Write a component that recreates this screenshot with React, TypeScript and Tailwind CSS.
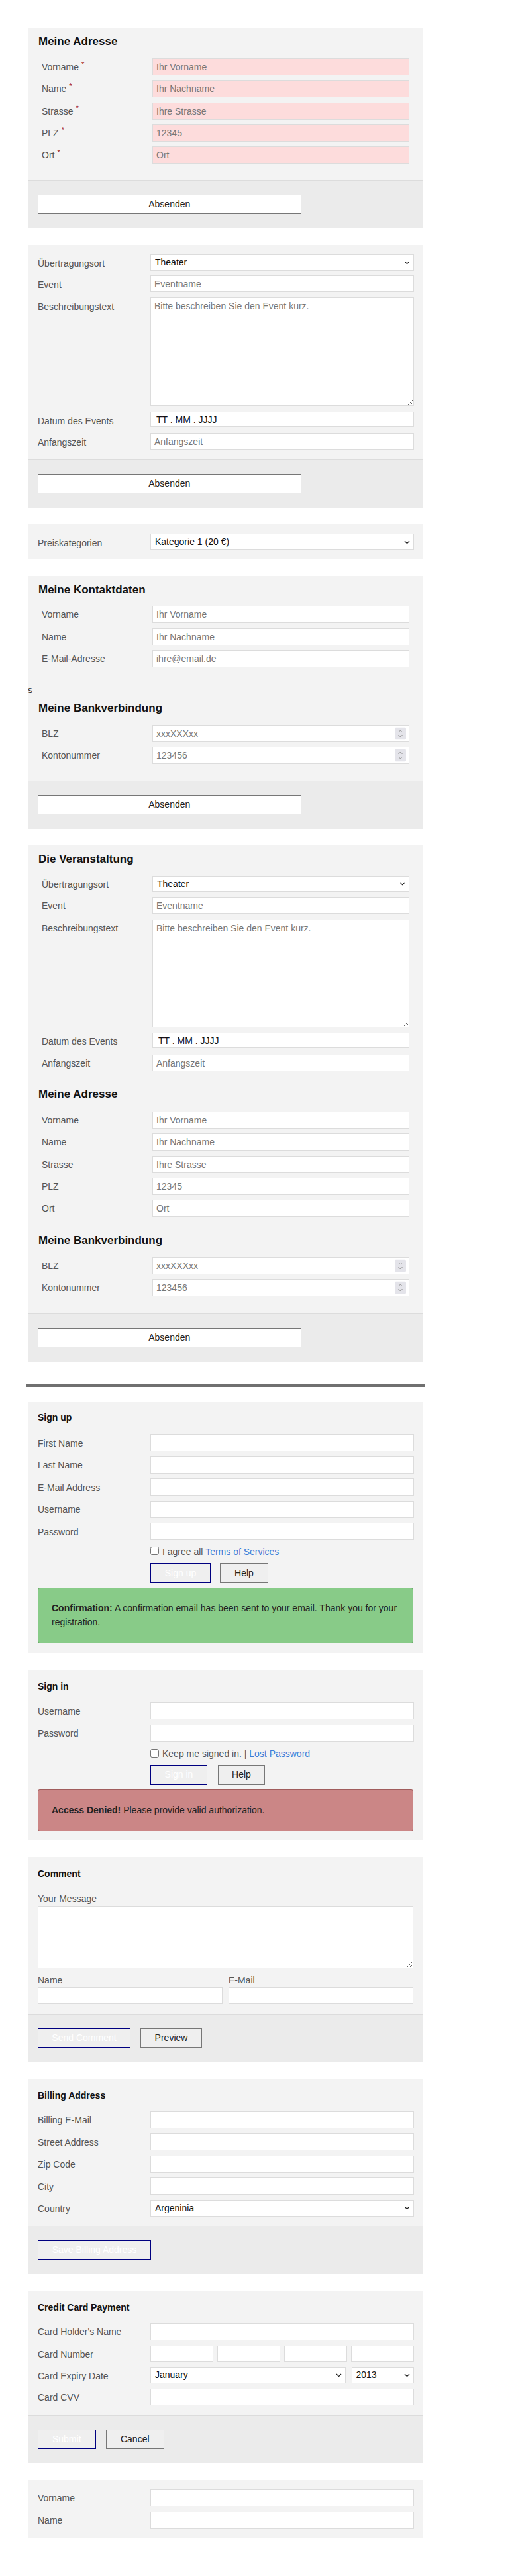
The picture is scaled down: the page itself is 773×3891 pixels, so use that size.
import React from 'react'

const inputBase =
    'block w-full border border-[#dcdcdc] px-[5px] text-[14px] text-[#111] outline-none placeholder:text-[#777]'

function TextInput({ placeholder, h = 'h-[26px]', pink }: { placeholder?: string; h?: string; pink?: boolean }) {
    return <input className={`${h} ${inputBase} ${pink ? 'bg-[#fddcdc]' : 'bg-white'}`} placeholder={placeholder} />
}

function DateInput({ h = 'h-[23px]' }: { h?: string }) {
    return <input readOnly value="TT . MM . JJJJ" className={`${h} ${inputBase} bg-white pl-[8px]`} />
}

function Area({ placeholder, h }: { placeholder?: string; h: string }) {
    return <textarea className={`${h} ${inputBase} bg-white pt-[4px] leading-[17px]`} placeholder={placeholder} />
}

function NumInput({ placeholder, h = 'h-[26px]' }: { placeholder: string; h?: string }) {
    return (
        <div className="relative">
            <input className={`${h} ${inputBase} bg-white`} placeholder={placeholder} />
            {/* Spinner wie im Safari */}
            <svg
                className="pointer-events-none absolute right-[5px] top-1/2 -translate-y-1/2"
                width="17"
                height="19"
                viewBox="0 0 17 19"
            >
                <rect width="17" height="19" rx="2" fill="#e4e4ea" />
                <path d="M5.5 7.5L8.5 4.5L11.5 7.5" fill="none" stroke="#8a8a8a" strokeWidth="1" />
                <path d="M5.5 11.5L8.5 14.5L11.5 11.5" fill="none" stroke="#8a8a8a" strokeWidth="1" />
            </svg>
        </div>
    )
}

function Select({ value, h = 'h-[25px]' }: { value: string; h?: string }) {
    return (
        <div className="relative">
            <select className={`${h} ${inputBase} appearance-none bg-white pl-[6px]`} defaultValue={value}>
                <option>{value}</option>
            </select>
            <svg
                className="pointer-events-none absolute right-[6px] top-1/2 -translate-y-1/2"
                width="9"
                height="6"
                viewBox="0 0 9 6"
            >
                <path d="M1 1L4.5 4.6L8 1" fill="none" stroke="#222" strokeWidth="1.3" />
            </svg>
        </div>
    )
}

function RowA({ label, req, children }: { label: string; req?: boolean; children: React.ReactNode }) {
    return (
        <div className="flex items-start pl-[21px]">
            <div className="h-[24px] w-[167px] shrink-0 text-[14px] leading-[26px] text-[#555]">
                {label}
                {req && <sup className="ml-[4px] text-[11px] text-[#a31515]">*</sup>}
            </div>
            <div className="w-[388px]">{children}</div>
        </div>
    )
}

function RowB({ label, children }: { label: string; children: React.ReactNode }) {
    return (
        <div className="flex items-start pl-[15px]">
            <div className="h-[24px] w-[170px] shrink-0 pt-[1.5px] text-[14px] leading-[25px] text-[#555]">{label}</div>
            <div className="w-[398px]">{children}</div>
        </div>
    )
}

function TitleA({ children }: { children: React.ReactNode }) {
    return <h2 className="pl-[16px] text-[17px] font-bold leading-[20px] text-[#111]">{children}</h2>
}

function TitleB({ children }: { children: React.ReactNode }) {
    return <h3 className="pl-[15px] text-[14px] font-bold leading-[20px] text-[#111]">{children}</h3>
}

function Footer({ children }: { children: React.ReactNode }) {
    return (
        <div className="flex gap-[15px] border-t border-[#dcdcdc] bg-[#ebebeb] px-[15px] pt-[21px] pb-[22px]">
            {children}
        </div>
    )
}

function Absenden() {
    return (
        <button className="h-[29px] w-[397.5px] border border-[#777] bg-white text-[14px] text-[#222]">
            Absenden
        </button>
    )
}

function Primary({ children, w, h = 'h-[29px]' }: { children: React.ReactNode; w: string; h?: string }) {
    return (
        <button className={`${w} ${h} border border-[#000080] bg-[#efefef] text-[14px] text-white`}>
            {children}
        </button>
    )
}

function Secondary({ children, w, h = 'h-[29px]' }: { children: React.ReactNode; w: string; h?: string }) {
    return (
        <button className={`${w} ${h} border border-[#777] bg-[#efefef] text-[14px] text-[#222]`}>
            {children}
        </button>
    )
}

export default function App() {
    return (
        <div className="min-h-[3891px] bg-white pl-[42px] pt-[42px] font-['Liberation_Sans',Arial,sans-serif]">
            {/* Meine Adresse (Pflichtfelder) */}
            <section className="w-[597px] bg-[#f3f3f3]">
                <div className="pt-[11px] pb-[25px]">
                    <TitleA>Meine Adresse</TitleA>
                    <div className="mt-[15px] flex flex-col gap-[7.25px]">
                        <RowA label="Vorname" req><TextInput pink placeholder="Ihr Vorname" /></RowA>
                        <RowA label="Name" req><TextInput pink placeholder="Ihr Nachname" /></RowA>
                        <RowA label="Strasse" req><TextInput pink placeholder="Ihre Strasse" /></RowA>
                        <RowA label="PLZ" req><TextInput pink placeholder="12345" /></RowA>
                        <RowA label="Ort" req><TextInput pink placeholder="Ort" /></RowA>
                    </div>
                </div>
                <Footer><Absenden /></Footer>
            </section>

            {/* Event */}
            <section className="mt-[25px] w-[597px] bg-[#f3f3f3]">
                <div className="flex flex-col pt-[14px] pb-[15px]">
                    <RowB label="Übertragungsort"><Select value="Theater" /></RowB>
                    <div className="mt-[7px]"><RowB label="Event"><TextInput h="h-[25px]" placeholder="Eventname" /></RowB></div>
                    <div className="mt-[8px]">
                        <RowB label="Beschreibungstext">
                            <Area h="h-[164px]" placeholder="Bitte beschreiben Sie den Event kurz." />
                        </RowB>
                    </div>
                    <div className="mt-[9px]"><RowB label="Datum des Events"><DateInput /></RowB></div>
                    <div className="mt-[8px]"><RowB label="Anfangszeit"><TextInput h="h-[25px]" placeholder="Anfangszeit" /></RowB></div>
                </div>
                <Footer><Absenden /></Footer>
            </section>

            {/* Preiskategorien */}
            <section className="mt-[25px] w-[597px] bg-[#f3f3f3] pt-[14px] pb-[14px]">
                <RowB label="Preiskategorien"><Select value="Kategorie 1 (20 €)" /></RowB>
            </section>

            {/* Kontaktdaten + Bank */}
            <section className="mt-[25px] w-[597px] bg-[#f3f3f3]">
                <div className="pt-[11px] pb-[25px]">
                    <TitleA>Meine Kontaktdaten</TitleA>
                    <div className="mt-[14px] flex flex-col gap-[7.5px]">
                        <RowA label="Vorname"><TextInput placeholder="Ihr Vorname" /></RowA>
                        <RowA label="Name"><TextInput placeholder="Ihr Nachname" /></RowA>
                        <RowA label="E-Mail-Adresse"><TextInput placeholder="ihre@email.de" /></RowA>
                    </div>
                    <div className="mt-[25px] w-fit text-[14px] leading-[18px] text-[#333]">s</div>
                    <div className="mt-[9px]"><TitleA>Meine Bankverbindung</TitleA></div>
                    <div className="mt-[15px] flex flex-col gap-[7px]">
                        <RowA label="BLZ"><NumInput placeholder="xxxXXXxx" /></RowA>
                        <RowA label="Kontonummer"><NumInput placeholder="123456" /></RowA>
                    </div>
                </div>
                <Footer><Absenden /></Footer>
            </section>

            {/* Die Veranstaltung */}
            <section className="mt-[25px] w-[597px] bg-[#f3f3f3]">
                <div className="pt-[11px] pb-[26px]">
                    <TitleA>Die Veranstaltung</TitleA>
                    <div className="mt-[15px] flex flex-col">
                        <RowA label="Übertragungsort"><Select h="h-[24px]" value="Theater" /></RowA>
                        <div className="mt-[8px]"><RowA label="Event"><TextInput h="h-[25px]" placeholder="Eventname" /></RowA></div>
                        <div className="mt-[9px]">
                            <RowA label="Beschreibungstext">
                                <Area h="h-[163px]" placeholder="Bitte beschreiben Sie den Event kurz." />
                            </RowA>
                        </div>
                        <div className="mt-[8px]"><RowA label="Datum des Events"><DateInput /></RowA></div>
                        <div className="mt-[9px]"><RowA label="Anfangszeit"><TextInput h="h-[25px]" placeholder="Anfangszeit" /></RowA></div>
                    </div>
                    <div className="mt-[25px]"><TitleA>Meine Adresse</TitleA></div>
                    <div className="mt-[16px] flex flex-col gap-[7.25px]">
                        <RowA label="Vorname"><TextInput placeholder="Ihr Vorname" /></RowA>
                        <RowA label="Name"><TextInput placeholder="Ihr Nachname" /></RowA>
                        <RowA label="Strasse"><TextInput placeholder="Ihre Strasse" /></RowA>
                        <RowA label="PLZ"><TextInput placeholder="12345" /></RowA>
                        <RowA label="Ort"><TextInput placeholder="Ort" /></RowA>
                    </div>
                    <div className="mt-[26px]"><TitleA>Meine Bankverbindung</TitleA></div>
                    <div className="mt-[15px] flex flex-col gap-[7px]">
                        <RowA label="BLZ"><NumInput placeholder="xxxXXXxx" /></RowA>
                        <RowA label="Kontonummer"><NumInput placeholder="123456" /></RowA>
                    </div>
                </div>
                <Footer><Absenden /></Footer>
            </section>

            <hr className="-ml-[2px] mt-[33px] h-[5px] w-[601px] border-0 bg-[#707070]" />

            {/* Sign up */}
            <section className="mt-[22px] w-[597px] bg-[#f3f3f3] pt-[14px] pb-[15px]">
                <TitleB>Sign up</TitleB>
                <div className="mt-[15px] flex flex-col gap-[7.5px]">
                    <RowB label="First Name"><TextInput /></RowB>
                    <RowB label="Last Name"><TextInput /></RowB>
                    <RowB label="E-Mail Address"><TextInput /></RowB>
                    <RowB label="Username"><TextInput /></RowB>
                    <RowB label="Password"><TextInput /></RowB>
                </div>
                <div className="ml-[185px] mt-[8px] flex h-[20px] items-center gap-[5px] text-[14px] text-[#555]">
                    <input type="checkbox" className="mb-[3px] h-[13px] w-[13px]" />
                    <span>
                        I agree all <a className="text-[#3b7dd8]">Terms of Services</a>
                    </span>
                </div>
                <div className="ml-[185px] mt-[7px] flex gap-[14px]">
                    <Primary w="w-[91px]" h="h-[30px]">Sign up</Primary>
                    <Secondary w="w-[73px]" h="h-[30px]">Help</Secondary>
                </div>
                <div className="mx-[15px] mt-[7px] rounded-[3px] border border-[#5f9f5f] bg-[#88cb88] px-[20px] py-[20px] text-[14px] leading-[21px] text-[#222]">
                    <b>Confirmation:</b> A confirmation email has been sent to your email. Thank you for your
                    registration.
                </div>
            </section>

            {/* Sign in */}
            <section className="mt-[25px] w-[597px] bg-[#f3f3f3] pt-[15px] pb-[14px]">
                <TitleB>Sign in</TitleB>
                <div className="mt-[14px] flex flex-col gap-[7.5px]">
                    <RowB label="Username"><TextInput /></RowB>
                    <RowB label="Password"><TextInput /></RowB>
                </div>
                <div className="ml-[185px] mt-[9px] flex h-[20px] items-center gap-[5px] text-[14px] text-[#555]">
                    <input type="checkbox" className="mb-[3px] h-[13px] w-[13px]" />
                    <span>
                        Keep me signed in. | <a className="text-[#3b7dd8]">Lost Password</a>
                    </span>
                </div>
                <div className="ml-[185px] mt-[6px] flex gap-[16px]">
                    <Primary w="w-[86px]" h="h-[30px]">Sign in</Primary>
                    <Secondary w="w-[71px]" h="h-[30px]">Help</Secondary>
                </div>
                <div className="mx-[15px] mt-[7px] rounded-[3px] border border-[#a05c5c] bg-[#cb8686] px-[20px] py-[20px] text-[14px] leading-[21px] text-[#222]">
                    <b>Access Denied!</b> Please provide valid authorization.
                </div>
            </section>

            {/* Comment */}
            <section className="mt-[25px] w-[597px] bg-[#f3f3f3]">
                <div className="px-[15px] pt-[15px] pb-[15px]">
                    <h3 className="text-[14px] font-bold leading-[20px] text-[#111]">Comment</h3>
                    <div className="mt-[18px] text-[14px] leading-[20px] text-[#555]">Your Message</div>
                    <div className="mt-[1px]"><Area h="h-[94px]" /></div>
                    <div className="mt-[8px] grid grid-cols-2 gap-x-[9px]">
                        <div>
                            <div className="text-[14px] leading-[20px] text-[#555]">Name</div>
                            <div className="mt-[1px]"><TextInput h="h-[25px]" /></div>
                        </div>
                        <div>
                            <div className="text-[14px] leading-[20px] text-[#555]">E-Mail</div>
                            <div className="mt-[1px]"><TextInput h="h-[25px]" /></div>
                        </div>
                    </div>
                </div>
                <Footer>
                    <Primary w="w-[140px]">Send Comment</Primary>
                    <Secondary w="w-[93px]">Preview</Secondary>
                </Footer>
            </section>

            {/* Billing Address */}
            <section className="mt-[25px] w-[597px] bg-[#f3f3f3]">
                <div className="pt-[15px] pb-[14px]">
                    <TitleB>Billing Address</TitleB>
                    <div className="mt-[14px] flex flex-col gap-[7.5px]">
                        <RowB label="Billing E-Mail"><TextInput /></RowB>
                        <RowB label="Street Address"><TextInput /></RowB>
                        <RowB label="Zip Code"><TextInput /></RowB>
                        <RowB label="City"><TextInput /></RowB>
                        <RowB label="Country"><Select value="Argeninia" /></RowB>
                    </div>
                </div>
                <Footer>
                    <Primary w="w-[171px]">Save Billing Address</Primary>
                </Footer>
            </section>

            {/* Credit Card */}
            <section className="mt-[25px] w-[597px] bg-[#f3f3f3]">
                <div className="pt-[15px] pb-[15px]">
                    <TitleB>Credit Card Payment</TitleB>
                    <div className="mt-[14px] flex flex-col gap-[8px]">
                        <RowB label="Card Holder's Name"><TextInput /></RowB>
                        <RowB label="Card Number">
                            <div className="flex gap-[6.5px]">
                                <div className="flex-1"><TextInput h="h-[25px]" /></div>
                                <div className="flex-1"><TextInput h="h-[25px]" /></div>
                                <div className="flex-1"><TextInput h="h-[25px]" /></div>
                                <div className="flex-1"><TextInput h="h-[25px]" /></div>
                            </div>
                        </RowB>
                        <RowB label="Card Expiry Date">
                            <div className="flex gap-[8.5px]">
                                <div className="w-[295px]"><Select h="h-[24px]" value="January" /></div>
                                <div className="flex-1"><Select h="h-[24px]" value="2013" /></div>
                            </div>
                        </RowB>
                        <RowB label="Card CVV"><TextInput h="h-[25px]" /></RowB>
                    </div>
                </div>
                <Footer>
                    <Primary w="w-[87.5px]">Submit</Primary>
                    <Secondary w="w-[88.5px]">Cancel</Secondary>
                </Footer>
            </section>

            {/* Kurzformular */}
            <section className="mt-[25px] w-[597px] bg-[#f3f3f3] pt-[14px] pb-[14px]">
                <div className="flex flex-col gap-[8px]">
                    <RowB label="Vorname"><TextInput /></RowB>
                    <RowB label="Name"><TextInput /></RowB>
                </div>
            </section>
        </div>
    )
}
